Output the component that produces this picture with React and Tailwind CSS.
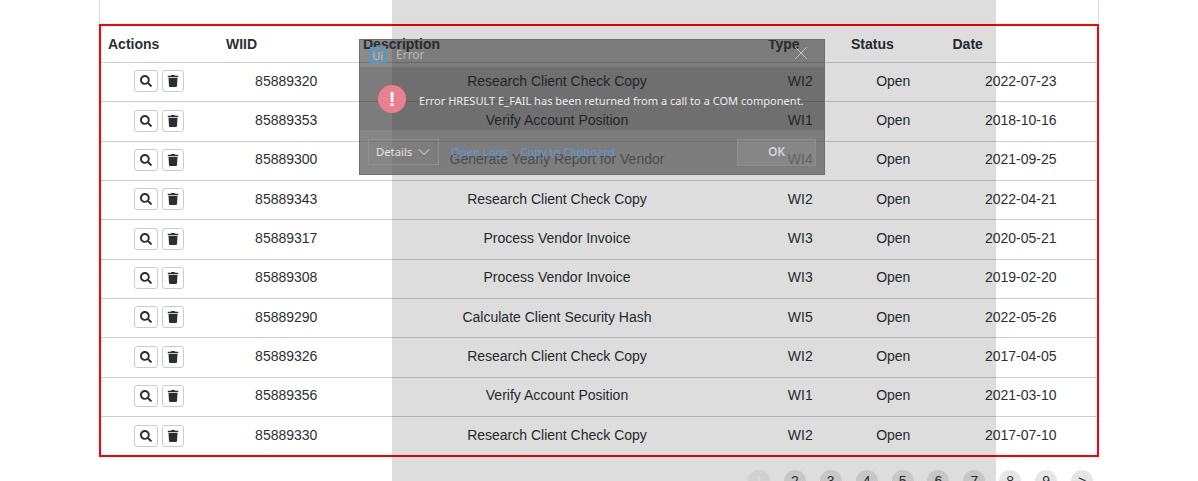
import { FaSearch, FaTrash } from "react-icons/fa";
import { FiChevronDown, FiX } from "react-icons/fi";

const rows = [
  ["85889320", "Research Client Check Copy", "WI2", "2022-07-23"],
  ["85889353", "Verify Account Position", "WI1", "2018-10-16"],
  ["85889300", "Generate Yearly Report for Vendor", "WI4", "2021-09-25"],
  ["85889343", "Research Client Check Copy", "WI2", "2022-04-21"],
  ["85889317", "Process Vendor Invoice", "WI3", "2020-05-21"],
  ["85889308", "Process Vendor Invoice", "WI3", "2019-02-20"],
  ["85889290", "Calculate Client Security Hash", "WI5", "2022-05-26"],
  ["85889326", "Research Client Check Copy", "WI2", "2017-04-05"],
  ["85889356", "Verify Account Position", "WI1", "2021-03-10"],
  ["85889330", "Research Client Check Copy", "WI2", "2017-07-10"],
];

const pages = ["1", "2", "3", "4", "5", "6", "7", "8", "9", ">"];

function ErrorDialog() {
  return (
    <div className="absolute left-[359px] top-[39px] w-[466px] h-[136px] flex flex-col bg-[#2c2c2c]/55 border border-[#6e6e6e] font-['Noto_Sans','Open_Sans',sans-serif]">
      <div className="h-[27px] flex items-center pl-[10px] pr-[12px] pt-[3px]">
        <div className="w-[16px] h-[16px] border-2 border-[#4a9bd4] flex items-center justify-center text-[11px] leading-none text-[#9cc8e8]">Ui</div>
        <span className="ml-[10px] text-[12px] text-[#b9b9b9]">Error</span>
        <FiX className="ml-auto text-[#dddddd] -translate-y-[2px]" size={22} strokeWidth={0.8} />
      </div>
      <div className="h-[63px] flex items-center pl-[18px] bg-black/10">
        <div className="w-[28px] h-[28px] rounded-full bg-[#e9808f] flex items-center justify-center text-white text-[20px] font-bold leading-none font-['Liberation_Sans',sans-serif]">!</div>
        <span className="ml-[13px] mt-[5px] text-[11.05px] text-[#eeeeee] whitespace-nowrap">Error HRESULT E_FAIL has been returned from a call to a COM component.</span>
      </div>
      <div className="flex-1 flex items-center pl-[8px] pr-[8px] bg-[#808080]/40">
        <div className="w-[71px] h-[26px] border border-[#8f8f8f] flex items-center pl-[7px] text-[11.3px] text-[#e4e4e4]">
          Details
          <FiChevronDown className="ml-[2px]" size={20} strokeWidth={1.2} />
        </div>
        <span className="ml-[12px] mt-[1px] text-[11.3px] text-[#5c9ad6]">Open Logs</span>
        <span className="ml-[12px] mt-[1px] text-[11.3px] text-[#5c9ad6]">Copy to Clipboard</span>
        <div className="ml-auto w-[79px] h-[27px] border border-[#8c8c8c] bg-[#9a9a9a]/30 flex items-center justify-center text-[12px] font-semibold text-[#d4d4d4]">OK</div>
      </div>
    </div>
  );
}

export default function App() {
  return (
    <div className="relative h-[481px] w-[1198px] overflow-hidden bg-white font-['Liberation_Sans',Arial,sans-serif] text-[14px] text-[#2b2f33]">
      <div className="ml-[99px] w-[1000px]">
        <div className="h-[24px] border-x border-[#dddddd]"></div>
        <div className="border-2 border-[#ff0000] h-[433px]">
          <table className="w-[996px] table-fixed border-collapse">
            <colgroup>
              <col className="w-[116px]" />
              <col className="w-[138.5px]" />
              <col className="w-[403px]" />
              <col className="w-[83.5px]" />
              <col className="w-[102.5px]" />
              <col className="w-[152.5px]" />
            </colgroup>
            <thead>
              <tr className="h-[36.5px] border-b border-[#cfcfcf]">
                <th className="text-left font-bold pl-[7px]">Actions</th>
                <th className="text-left font-bold pl-[9px]">WIID</th>
                <th className="text-left font-bold pl-[7.5px]">Description</th>
                <th className="text-left font-bold pl-[9.5px]">Type</th>
                <th className="text-left font-bold pl-[9px]">Status</th>
                <th className="text-left font-bold pl-2">Date</th>
              </tr>
            </thead>
            <tbody>
              {rows.map((row) => (
                <tr key={row[0]} className="h-[39.35px] border-b border-[#cfcfcf] last:border-b-0 text-center">
                  <td className="pb-[2px]">
                    <div className="flex justify-center gap-[4px]">
                      <button className="w-[24px] h-[22px] border border-[#cccccc] rounded-[3px] flex items-center justify-center">
                        <FaSearch size={12} />
                      </button>
                      <button className="w-[22px] h-[22px] border border-[#cccccc] rounded-[3px] flex items-center justify-center">
                        <FaTrash size={12} />
                      </button>
                    </div>
                  </td>
                  <td className="pb-[2px]">{row[0]}</td>
                  <td className="pb-[2px]">{row[1]}</td>
                  <td className="pb-[2px]">{row[2]}</td>
                  <td className="pb-[2px]">Open</td>
                  <td className="pb-[2px]">{row[3]}</td>
                </tr>
              ))}
            </tbody>
          </table>
        </div>
        <div className="flex justify-end gap-[13.9px] pt-[13px] pr-[6px]">
          {pages.map((p) => (
            <div key={p} className={`w-[22px] h-[22px] rounded-full flex items-center justify-center ${p === "1" ? "bg-[#f0f0f0] text-white" : "bg-[#e6e6e6] text-[#333333]"}`}>
              {p}
            </div>
          ))}
        </div>
      </div>
      <div className="absolute left-[392px] top-0 w-[604px] h-[481px] bg-black/[0.135]"></div>
      <ErrorDialog />
    </div>
  );
}
